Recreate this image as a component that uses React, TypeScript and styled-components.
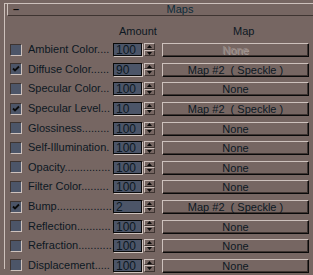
import styled, { createGlobalStyle } from 'styled-components';

const colors = {
  bg: '#766662',
  light: '#cdc1bc',
  dark: '#3e3431',
  black: '#0a0a0a',
  field: '#4c5568',
  text: '#0d1822',
  title: '#0f2c3a',
  disabled: '#958884',
  disabledShadow: '#a99c98',
};

const SPECKLE = 'Map #2  ( Speckle )';

// dots: how many leader dots fit after the label before the amount field
const maps = [
  { label: 'Ambient Color', dots: 4, checked: false, amount: '100', map: 'None', disabled: true },
  { label: 'Diffuse Color', dots: 6, checked: true, amount: '90', map: SPECKLE },
  { label: 'Specular Color', dots: 3, checked: false, amount: '100', map: 'None' },
  { label: 'Specular Level', dots: 3, checked: true, amount: '10', map: SPECKLE },
  { label: 'Glossiness', dots: 9, checked: false, amount: '100', map: 'None' },
  { label: 'Self-Illumination', dots: 1, checked: false, amount: '100', map: 'None' },
  { label: 'Opacity', dots: 15, checked: false, amount: '100', map: 'None' },
  { label: 'Filter Color', dots: 9, checked: false, amount: '100', map: 'None' },
  { label: 'Bump', dots: 18, checked: true, amount: '2', map: SPECKLE },
  { label: 'Reflection', dots: 11, checked: false, amount: '100', map: 'None' },
  { label: 'Refraction', dots: 11, checked: false, amount: '100', map: 'None' },
  { label: 'Displacement', dots: 5, checked: false, amount: '100', map: 'None' },
];

export default function App() {
  return (
    <>
      <GlobalStyle />
      <Page>
        <Rollout>
          <Header>
            <Collapse>–</Collapse>
            <Title>Maps</Title>
          </Header>
          <ColumnHeads>
            <AmountHead>Amount</AmountHead>
            <MapHead>Map</MapHead>
          </ColumnHeads>
          <Rows>
            {maps.map((m) => (
              <Row key={m.label}>
                <Check>
                  {m.checked && (
                    <svg width="8" height="8" viewBox="0 0 8 8">
                      <path d="M1 3.5 L3 5.5 L7 1.5" stroke={colors.black} strokeWidth="1.8" fill="none" />
                    </svg>
                  )}
                </Check>
                <Label>
                  {m.label}
                  {'.'.repeat(m.dots)}
                </Label>
                <Amount>{m.amount}</Amount>
                <Spinner>
                  <SpinBtn>
                    <svg width="5" height="3" viewBox="0 0 5 3">
                      <path d="M2.5 0 L5 3 L0 3 Z" fill={colors.black} />
                    </svg>
                  </SpinBtn>
                  <SpinBtn>
                    <svg width="5" height="3" viewBox="0 0 5 3">
                      <path d="M0 0 L5 0 L2.5 3 Z" fill={colors.black} />
                    </svg>
                  </SpinBtn>
                </Spinner>
                <MapButton $disabled={m.disabled}>{m.map}</MapButton>
              </Row>
            ))}
          </Rows>
        </Rollout>
      </Page>
    </>
  );
}

const GlobalStyle = createGlobalStyle`
  html, body {
    margin: 0;
    background: ${colors.bg};
    overflow: hidden;
  }
  body {
    font-family: "Liberation Sans", Arial, sans-serif;
    font-size: 11px;
    color: ${colors.text};
  }
`;

const Page = styled.div`
  width: 313px;
  height: 275px;
  padding: 9px 0 0 4px;
  box-sizing: border-box;
  overflow: hidden;
`;

const Rollout = styled.div`
  border-left: 1px solid ${colors.light};
  height: 100%;
  background:
    linear-gradient(${colors.light}, ${colors.light}) 0 0 / 3px 1px no-repeat;
`;

const Header = styled.div`
  display: flex;
  align-items: center;
  height: 11px;
  margin: -6px -30px 0 2px;
  border-top: 1px solid ${colors.light};
  border-left: 1px solid ${colors.light};
  border-bottom: 1px solid ${colors.dark};
  background: ${colors.bg};
  line-height: 11px;
`;

const Collapse = styled.span`
  width: 14px;
  padding-left: 5px;
  color: ${colors.black};
  font-weight: bold;
`;

const Title = styled.span`
  flex: 1;
  text-align: center;
  color: ${colors.title};
  padding-right: 10px;
`;

const ColumnHeads = styled.div`
  display: flex;
  height: 15px;
  padding-top: 9px;
  line-height: 13px;
`;

const AmountHead = styled.span`
  margin-left: 114px;
  width: 40px;
`;

const MapHead = styled.span`
  margin-left: 74px;
`;

const Rows = styled.div`
  display: grid;
  grid-auto-rows: 19.6px;
`;

const Row = styled.div`
  display: flex;
  align-items: center;
  padding-left: 5px;
`;

const Check = styled.div`
  width: 10px;
  height: 10px;
  display: flex;
  align-items: center;
  justify-content: center;
  background: ${colors.field};
  border: 1px solid;
  border-color: ${colors.dark} ${colors.light} ${colors.light} ${colors.dark};
`;

const Label = styled.div`
  width: 84px;
  margin-left: 6px;
  white-space: nowrap;
  overflow: hidden;
  line-height: 13px;
`;

const Amount = styled.div`
  width: 25px;
  height: 11px;
  margin-left: 1px;
  padding-left: 2px;
  line-height: 12px;
  font-size: 12px;
  background: ${colors.field};
  border: 1px solid ${colors.black};
  box-shadow: 1px 1px 0 ${colors.light};
`;

const Spinner = styled.div`
  display: flex;
  flex-direction: column;
  margin-left: 2px;
  width: 11px;
  height: 13px;
`;

const SpinBtn = styled.div`
  flex: 1;
  display: flex;
  align-items: center;
  justify-content: center;
  box-sizing: border-box;
  border: 1px solid;
  border-color: ${colors.light} ${colors.dark} ${colors.dark} ${colors.light};
`;

const MapButton = styled.div<{ $disabled?: boolean }>`
  width: 145px;
  height: 12px;
  margin-left: 7px;
  text-align: center;
  white-space: pre;
  line-height: 12px;
  font-size: 11px;
  border-top: 1px solid ${colors.light};
  border-left: 1px solid ${colors.light};
  box-shadow: 1px 1px 0 ${colors.black}, inset -1px -1px 0 ${colors.dark};
  color: ${(p) => (p.$disabled ? colors.disabled : colors.text)};
  text-shadow: ${(p) => (p.$disabled ? `1px 1px 0 ${colors.disabledShadow}` : 'none')};
`;
